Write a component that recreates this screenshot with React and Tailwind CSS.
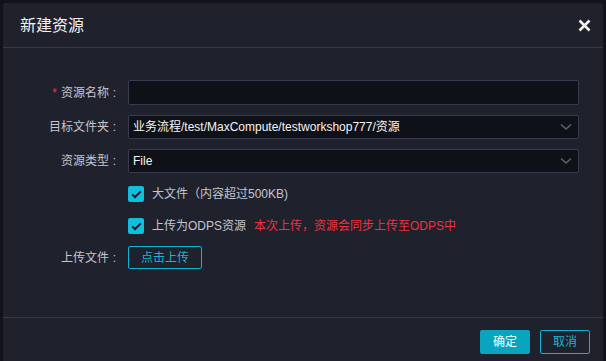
export default function App() {
  const font = { fontFamily: '"Liberation Sans", "Noto Sans CJK SC", sans-serif' };

  const Chevron = () => (
    <svg width="12" height="8" viewBox="0 0 12 8" className="shrink-0">
      <path d="M1 1.5 L6 6 L11 1.5" fill="none" stroke="#5d6072" strokeWidth="1.6" />
    </svg>
  );

  const Check = () => (
    <span className="w-[16px] h-[16px] rounded-[2px] bg-[#0fbfdc] flex items-center justify-center shrink-0">
      <svg width="11" height="9" viewBox="0 0 11 9">
        <path d="M1.2 4.6 L4 7.2 L9.8 1.4" fill="none" stroke="#141620" strokeWidth="2" />
      </svg>
    </span>
  );

  const Label = ({ children, required }) => (
    <label className="w-[113px] flex justify-end items-center text-[#c4c6cf] shrink-0">
      {required && <span className="text-[#f0323c] mr-[4px]">*</span>}
      <span>{children}</span>
      <span className="w-[7px] text-right">:</span>
    </label>
  );

  return (
    <div className="min-h-screen bg-[#12131a] pt-[3px] pl-[3px]" style={font}>
      <div className="w-[600px] rounded-[3px] bg-[#1f212c] text-[12px]">
        {/* Header */}
        <div className="h-[45px] pl-[17px] pr-[12px] flex items-center justify-between border-b border-[#363849]">
          <span className="text-[16px] text-[#f2f2f4] pt-[1px]">新建资源</span>
          <svg width="13" height="13" viewBox="0 0 13 13">
            <path d="M1.5 1.5 L11.5 11.5 M11.5 1.5 L1.5 11.5" stroke="#f2f2f2" strokeWidth="2.6" />
          </svg>
        </div>

        {/* Body */}
        <div className="pt-[32px] pb-[48px] pr-[24px]">
          <div className="flex flex-col gap-[10px]">
            <div className="flex items-center">
              <Label required>资源名称</Label>
              <div className="ml-[12px] flex-1 h-[25px] bg-[#0f1118] border border-[#393c4e] rounded-[2px]" />
            </div>
            <div className="flex items-center">
              <Label>目标文件夹</Label>
              <div className="ml-[12px] flex-1 h-[24px] bg-[#0f1118] border border-[#393c4e] rounded-[2px] flex items-center justify-between pl-[4px] pr-[6px]">
                <span className="text-[#f4f4f6]">业务流程/test/MaxCompute/testworkshop777/资源</span>
                <Chevron />
              </div>
            </div>
            <div className="flex items-center">
              <Label>资源类型</Label>
              <div className="ml-[12px] flex-1 h-[24px] bg-[#0f1118] border border-[#393c4e] rounded-[2px] flex items-center justify-between pl-[4px] pr-[6px]">
                <span className="text-[#f4f4f6]">File</span>
                <Chevron />
              </div>
            </div>
          </div>

          <div className="mt-[9px] h-[24px] flex items-center pl-[125px] gap-[8px]">
            <Check />
            <span className="text-[#c4c6cf]">大文件（内容超过500KB)</span>
          </div>

          <div className="mt-[8px] h-[24px] flex items-center pl-[125px] gap-[8px]">
            <Check />
            <span className="text-[#c4c6cf]">上传为ODPS资源</span>
            <span className="text-[#f0323c]">本次上传，资源会同步上传至ODPS中</span>
          </div>

          <div className="mt-[8px] flex items-center">
            <Label>上传文件</Label>
            <button className="ml-[12px] w-[74px] h-[23px] border border-[#0fb3d2] rounded-[2px] text-[#19b6d3]">
              点击上传
            </button>
          </div>
        </div>

        {/* Footer */}
        <div className="border-t border-[#363849] flex justify-end gap-[10px] pt-[12px] pb-[13px] pr-[13px]">
          <button className="w-[50px] h-[24px] rounded-[2px] bg-[#08a4c0] text-white">确定</button>
          <button className="w-[50px] h-[24px] rounded-[2px] border border-[#0fb3d2] text-[#19b6d3]">取消</button>
        </div>
      </div>
    </div>
  );
}
